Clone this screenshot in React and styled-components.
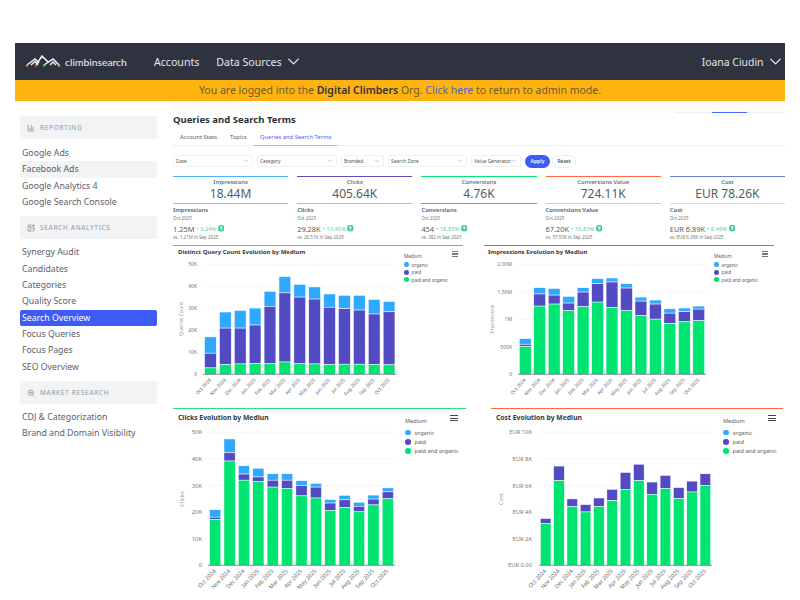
import React from "react";
import styled, { createGlobalStyle } from "styled-components";
import { ChartColumn, ImagePlus, ZoomIn, ChevronDown } from "lucide-react";

const FONT = '"Noto Sans", "Open Sans", Arial, sans-serif';
const BLUE = "#2fa8ff";
const PURPLE = "#534bc4";
const GREEN = "#00e472";

const Global = createGlobalStyle`
  html, body { margin: 0; padding: 0; background: #fff; width: 800px; height: 600px; overflow: hidden; }
  body { font-family: ${FONT}; color: #444; }
  * { box-sizing: border-box; }
`;

const Page = styled.div`
  width: 800px; height: 600px; padding: 43px 15px 0; overflow: hidden;
  display: flex; flex-direction: column;
`;
const Nav = styled.header`
  height: 37px; background: #2f3340; display: flex; align-items: center; padding: 0 0 0 11px; color: #e4e6ea;
  flex: none;
`;
const Brand = styled.div`
  display: flex; align-items: center; gap: 4px; width: 128px; flex: none;
`;
const BrandName = styled.span`
  font-size: 10.3px; font-weight: 500; color: #e6e8ec; font-family: "Lato", ${FONT};
`;
const NavLink = styled.span`
  font-size: 10.6px; margin-right: 17px; display: flex; align-items: center; gap: 2.5px; white-space: nowrap;
`;
const Spacer = styled.div`flex: 1;`;
const NavUser = styled(NavLink)`margin-right: 0; font-size: 10.4px;`;
const Banner = styled.div`
  height: 21px; background: #ffb30f; flex: none; text-align: center; font-size: 10.5px; line-height: 21px; color: #6b5a2e;
  b { color: #2f3340; font-weight: 600; }
  a { color: #4a5fd8; }
`;
const Body = styled.div`display: flex; flex: 1; min-height: 0;`;
const Side = styled.aside`
  width: 158px; flex: none; padding: 15px 16px 0 5px;
`;
const SectionHead = styled.div`
  height: 23px; background: #f1f3f5; display: flex; align-items: center; gap: 5px; padding-left: 7px;
  font-size: 6.4px; letter-spacing: 0.75px; color: #8b95a1; margin-bottom: 6px; text-transform: uppercase;
  &:not(:first-child) { margin-top: 6px; margin-bottom: 5px; }
`;
const Item = styled.div`
  height: 16.35px; line-height: 16.35px; font-size: 8.75px; padding-left: 2px; border-radius: 2px; white-space: nowrap;
  color: ${p => (p.$active ? "#fff" : "#5a616b")};
  background: ${p => (p.$active ? "#3f5bf6" : p.$hover ? "#f1f3f5" : "transparent")};
`;
const Main = styled.main`flex: 1; min-width: 0;`;
const Strip = styled.div`
  height: 12px; background: #fbfbfb; display: flex; justify-content: flex-end;
`;
const StripTrack = styled.div`
  width: 108px; height: 12px; border-bottom: 1px solid #eceef1; display: flex; padding-left: 35px;
`;
const StripMark = styled.div`width: 35px; height: 12px; border-bottom: 1px solid #4f6bf5;`;
const Title = styled.h1`
  margin: 0; font-size: 9.5px; line-height: 14px; font-weight: 700; color: #2b2f38;
`;
const Tabs = styled.div`
  display: flex; height: 17px; border-bottom: 1px solid #eceef1; margin-top: 2px; padding-top: 3px; padding-left: 1px;
`;
const Tab = styled.div`
  font-size: 5.8px; padding: 0 6px; height: 13.5px; line-height: 11px; margin-right: 1px; color: ${p => (p.$on ? "#4f63e8" : "#555c66")};
  border-bottom: ${p => (p.$on ? "1px solid #a5b2fb" : "none")};
`;
const Filters = styled.div`
  display: flex; align-items: center; gap: 4px; margin-top: 8px; height: 14px;
`;
const Select = styled.div`
  width: ${p => p.$w}px; height: 12px; border: 1px solid #eef0f3; border-radius: 2px; font-size: 4.8px; color: #555;
  display: flex; align-items: center; justify-content: space-between; padding: 0 3px 0 2px; flex: none; white-space: nowrap;
  svg { color: #7d8fe0; flex: none; }
`;
const Apply = styled.div`
  width: 25px; height: 13px; border-radius: 7px; background: #3f5bf6; color: #fff; font-size: 5px; display: flex; align-items: center; justify-content: center; font-weight: 600;
`;
const Reset = styled(Apply)`
  width: 24px; background: #fff; color: #444; border: 1px solid #eceef1; margin-left: -2px; font-weight: 500;
`;
const StatGrid = styled.div`
  display: grid; grid-template-columns: repeat(5, 1fr); gap: 0 9px; margin-top: 8px; height: 69px;
`;
const Stat = styled.div``;
const Total = styled.div`
  height: 28px; border-top: 1.3px solid ${p => p.$c}; border-bottom: 1.3px solid ${p => p.$b}; text-align: center; color: #555c66;
`;
const TotalLabel = styled.div`font-size: 5.9px; line-height: 7px; margin-top: 2px; font-weight: 500;`;
const TotalValue = styled.div`font-size: 12px; line-height: 14px; margin-top: 1px;`;
const MonthLabel = styled.div`font-size: 5.9px; font-weight: 600; line-height: 8px; margin-top: 2px; color: #555c66;`;
const Small = styled.div`font-size: 4.5px; line-height: 6px; color: #777; white-space: nowrap; margin-top: ${p => p.$mt || 0}px;`;
const TrendRow = styled.div`
  display: flex; align-items: center; gap: 2px; height: 9px; margin-top: 3px; margin-bottom: 1px; font-size: 7.4px; color: #555c66; white-space: nowrap;
`;
const Pct = styled.span`font-size: 5.8px; color: #5fcf9b; display: flex; align-items: center; gap: 1.5px;`;
const ChartRow = styled.div`
  display: flex; gap: ${p => p.$gap}px; height: ${p => p.$h}px;
`;
const Card = styled.section`
  width: ${p => p.$w}px; flex: none; border-top: 1.3px solid ${p => p.$c}; display: flex; position: relative; height: 200px;
`;
const Plot = styled.div`width: ${p => p.$w}px; flex: none;`;
const ChartTitle = styled.h2`
  margin: 0; height: 12.5px; line-height: ${p => p.$lh}px; font-size: ${p => p.$fs}px; font-weight: 700; color: #33373f; padding-left: ${p => p.$pl}px; white-space: nowrap;
`;
const ChartSvg = styled.svg`display: block; font-family: ${FONT};`;
const Legend = styled.div`
  flex: 1; padding-top: ${p => p.$top}px; position: relative; font-size: ${p => p.$fs}px; color: #555c66;
`;
const LegendTitle = styled.div`line-height: ${p => p.$lh}px; margin-bottom: ${p => p.$mb}px;`;
const LegendItem = styled.div`
  display: flex; align-items: center; gap: ${p => p.$gap}px; height: ${p => p.$h}px; white-space: nowrap;
`;
const Dot = styled.span`
  width: ${p => p.$s}px; height: ${p => p.$s}px; border-radius: 50%; background: ${p => p.$c}; flex: none;
`;
const Burger = styled.div`
  position: absolute; top: ${p => p.$top}px; right: ${p => p.$right}px; width: ${p => p.$w}px; height: ${p => p.$h}px;
  display: flex; flex-direction: column; justify-content: space-between;
  span { display: block; height: 1.4px; background: ${p => p.$c}; }
`;

const MONTHS = ["Oct 2024","Nov 2024","Dec 2024","Jan 2025","Feb 2025","Mar 2025","Apr 2025","May 2025","Jun 2025","Jul 2025","Aug 2025","Sep 2025","Oct 2025"];

function BarChart({ data, max, ticks, axis, left, right, top, bottom, height, width, fs, labelRight, axisX, axisY, barRatio }) {
  const band = (right - left) / data.length;
  const bw = band * barRatio;
  const y = v => bottom - (v / max) * (bottom - top);
  return (
    <ChartSvg width={width} height={height} viewBox={`0 0 ${width} ${height}`}>
      {ticks.map(([v, label]) => (
        <g key={label}>
          {v > 0 && <line x1={left} x2={right} y1={y(v)} y2={y(v)} stroke="#f2f4f6" strokeWidth="0.8" />}
          <text x={labelRight} y={y(v) + fs * 0.36} fontSize={fs} fill="#777" textAnchor="end">{label}</text>
        </g>
      ))}
      {data.map((d, i) => {
        const x = left + band * i + (band - bw) / 2;
        const [g, p, b] = d;
        return (
          <g key={i} stroke="#fff" strokeWidth="0.5">
            {b > p && <rect x={x} y={y(b)} width={bw} height={y(p) - y(b)} fill={BLUE} />}
            <rect x={x} y={y(p)} width={bw} height={y(g) - y(p)} fill={PURPLE} />
            <rect x={x} y={y(g)} width={bw} height={bottom - y(g)} fill={GREEN} />
          </g>
        );
      })}
      <line x1={left} x2={right} y1={bottom} y2={bottom} stroke="#6b7078" strokeWidth="0.8" />
      {MONTHS.map((m, i) => {
        const cx = left + band * i + band / 2 + 1;
        const ly = bottom + 6;
        return (
          <text key={i} x={cx} y={ly} fontSize={fs - 0.2} fill="#666" textAnchor="end" transform={`rotate(-47 ${cx} ${ly})`}>{m}</text>
        );
      })}
      <text x={axisX} y={axisY} fontSize={fs} fill="#999" textAnchor="middle" transform={`rotate(-90 ${axisX} ${axisY})`}>{axis}</text>
    </ChartSvg>
  );
}

function ChartCard({ title, color, w, plotW, pl, big, chart, burgerRight }) {
  return (
    <Card $w={w} $c={color}>
      <Plot $w={plotW}>
        <ChartTitle $fs={big ? 6.8 : 6} $lh={big ? 18 : 12} $pl={pl}>{title}</ChartTitle>
        <BarChart width={plotW} {...chart} />
      </Plot>
      <Legend $top={big ? 8 : 7} $fs={big ? 5.6 : 4.6}>
        <LegendTitle $lh={big ? 8 : 7} $mb={big ? 3 : 1}>Medium</LegendTitle>
        {[["organic", BLUE], ["paid", PURPLE], ["paid and organic", GREEN]].map(([t, c]) => (
          <LegendItem key={t} $h={big ? 9.2 : 7.5} $gap={big ? 4 : 3}>
            <Dot $c={c} $s={big ? 5.5 : 4.6} />
            {t}
          </LegendItem>
        ))}
        <Burger $top={big ? 6 : 5} $right={burgerRight} $w={big ? 8 : 6.5} $h={big ? 6.5 : 6} $c={big ? "#444" : "#777"}>
          <span /><span /><span />
        </Burger>
      </Legend>
    </Card>
  );
}

const STATS = [
  { l: "Impressions", v: "18.44M", c: "#4fb3ff", b: "#e88ff0", m: "1.25M", p: "3.24%", vs: "vs. 1.21M in Sep 2025" },
  { l: "Clicks", v: "405.64K", c: "#5b4fc4", b: "#5fe8cc", m: "29.28K", p: "10.45%", vs: "vs. 26.51K in Sep 2025" },
  { l: "Conversions", v: "4.76K", c: "#00e676", b: "#ff6b5b", m: "454", p: "18.85%", vs: "vs. 382 in Sep 2025" },
  { l: "Conversions Value", v: "724.11K", c: "#ff6b3d", b: "#ffc080", m: "67.20K", p: "16.83%", vs: "vs. 57.53K in Sep 2025" },
  { l: "Cost", v: "EUR 78.26K", c: "#6b80c8", b: "#b0efe5", m: "EUR 6.89K", p: "8.49%", vs: "vs. EUR 6.35K in Sep 2025" },
];

const D1 = [[2.9,9.6,17],[4.4,21,28.3],[4.7,21,29],[5,22.4,30.1],[5,30.9,37.7],[5.6,37,44.4],[5,35.1,40.9],[4.7,34.2,39.7],[4.4,30.5,36.5],[4.6,29.8,35.9],[4.6,29.2,35.9],[4.4,27.4,34],[4.3,28.4,33.1]];
const D2 = [[.505,.547,.65],[1.24,1.46,1.575],[1.277,1.44,1.56],[1.155,1.295,1.416],[1.228,1.495,1.575],[1.313,1.647,1.739],[1.216,1.678,1.751],[1.155,1.568,1.647],[1.064,1.331,1.404],[1.003,1.277,1.35],[.924,1.112,1.191],[.954,1.137,1.204],[.973,1.185,1.24]];
const D3 = [[17.3,18.1,20.9],[39.2,42.3,47.5],[32,34.3,37.4],[31.4,33.2,36.5],[29.4,32,34.4],[28.9,32,34.4],[26.1,30,31.8],[25.3,29.4,30.8],[20.7,23.4,24.7],[21.7,24.6,26.3],[20.1,22.2,23.7],[22.7,24.9,26.4],[25,27.6,29.1]];
const D4 = [[3.14,3.52,0],[6.36,7.46,0],[4.41,4.99,0],[4.01,4.56,0],[4.41,5.06,0],[4.86,5.71,0],[5.71,6.98,0],[6.36,7.6,0],[5.34,6.26,0],[5.76,6.76,0],[5.01,5.84,0],[5.51,6.33,0],[6.01,6.88,0]];

const kTicks = [[0,"0"],[10,"10K"],[20,"20K"],[30,"30K"],[40,"40K"],[50,"50K"]];

function Logo() {
  return (
    <svg width="35" height="13" viewBox="0 0 35 13" fill="none">
      <path d="M1 10 L9 4 L13 8 M10 10 L16 1 L22 7 M18 10 L27 4 L33 10" stroke="#f6f6f6" strokeWidth="1.5" />
      <path d="M5 10 L9 6.5 L12 10 M24 10 L27 7 L30 10" stroke="#f6f6f6" strokeWidth="1.3" />
      <circle cx="1" cy="10.5" r="1.2" fill="#f08a2c" />
      <circle cx="10" cy="10.5" r="1.2" fill="#e8552c" />
      <circle cx="18" cy="10.5" r="1.2" fill="#5fc04a" />
      <circle cx="33" cy="10.5" r="1.2" fill="#a5c63f" />
    </svg>
  );
}

function UpBadge() {
  return (
    <svg width="6.5" height="6.5" viewBox="0 0 10 10">
      <circle cx="5" cy="5" r="5" fill="#3fc78f" />
      <path d="M5 8V2.5M2.6 4.8 5 2.4l2.4 2.4" stroke="#fff" strokeWidth="1.5" fill="none" />
    </svg>
  );
}

function SelectBox({ w, children }) {
  return <Select $w={w}>{children}<ChevronDown size={6} strokeWidth={2} /></Select>;
}

export default function App() {
  return (
    <Page>
      <Global />
      <Nav>
        <Brand><Logo /><BrandName>climbinsearch</BrandName></Brand>
        <NavLink>Accounts</NavLink>
        <NavLink>Data Sources <ChevronDown size={19} strokeWidth={1.7} /></NavLink>
        <Spacer />
        <NavUser>Ioana Ciudin <ChevronDown size={19} strokeWidth={1.7} /></NavUser>
      </Nav>
      <Banner>You are logged into the <b>Digital Climbers</b> Org. <a>Click here</a> to return to admin mode.</Banner>
      <Body>
        <Side>
          <SectionHead><ChartColumn size={8} strokeWidth={2.4} /> Reporting</SectionHead>
          <Item>Google Ads</Item>
          <Item $hover>Facebook Ads</Item>
          <Item>Google Analytics 4</Item>
          <Item>Google Search Console</Item>
          <SectionHead><ImagePlus size={8} strokeWidth={2.4} /> Search Analytics</SectionHead>
          <Item>Synergy Audit</Item>
          <Item>Candidates</Item>
          <Item>Categories</Item>
          <Item>Quality Score</Item>
          <Item $active>Search Overview</Item>
          <Item>Focus Queries</Item>
          <Item>Focus Pages</Item>
          <Item>SEO Overview</Item>
          <SectionHead><ZoomIn size={8} strokeWidth={2.4} /> Market Research</SectionHead>
          <Item>CDJ &amp; Categorization</Item>
          <Item>Brand and Domain Visibility</Item>
        </Side>
        <Main>
          <Strip><StripTrack><StripMark /></StripTrack></Strip>
          <Title>Queries and Search Terms</Title>
          <Tabs>
            <Tab>Account Stats</Tab>
            <Tab>Topics</Tab>
            <Tab $on>Queries and Search Terms</Tab>
          </Tabs>
          <Filters>
            <SelectBox w={80}>Date</SelectBox>
            <SelectBox w={80}>Category</SelectBox>
            <SelectBox w={43}>Branded</SelectBox>
            <SelectBox w={79}>Search Zone</SelectBox>
            <SelectBox w={50}>Value Generator</SelectBox>
            <Apply>Apply</Apply>
            <Reset>Reset</Reset>
          </Filters>
          <StatGrid>
            {STATS.map(s => (
              <Stat key={s.l}>
                <Total $c={s.c} $b={s.b}>
                  <TotalLabel>{s.l}</TotalLabel>
                  <TotalValue>{s.v}</TotalValue>
                </Total>
                <MonthLabel>{s.l}</MonthLabel>
                <Small $mt={1}>Oct 2025</Small>
                <TrendRow>{s.m} <Pct>• {s.p} <UpBadge /></Pct></TrendRow>
                <Small>{s.vs}</Small>
              </Stat>
            ))}
          </StatGrid>
          <ChartRow $gap={21} $h={163}>
            <ChartCard title="Distinct Query Count Evolution by Medium" color="#4fb3ff" w={290} plotW={231} pl={5} burgerRight={5}
              chart={{ data: D1, max: 50, ticks: kTicks, axis: "Queries Count", left: 30, right: 223.5, top: 5.3, bottom: 115.3, height: 150, fs: 5, labelRight: 24, axisX: 10, axisY: 60, barRatio: 0.79 }} />
            <ChartCard title="Impressions Evolution by Mediun" color="#7a70d8" w={290} plotW={230} pl={4} burgerRight={6}
              chart={{ data: D2, max: 2, ticks: [[0,"0"],[.5,"500K"],[1,"1M"],[1.5,"1.50M"],[2,"2.00M"]], axis: "Impressions", left: 34, right: 222, top: 5.3, bottom: 115.3, height: 150, fs: 5, labelRight: 28, axisX: 10, axisY: 60, barRatio: 0.82 }} />
          </ChartRow>
          <ChartRow $gap={25} $h={200}>
            <ChartCard big title="Clicks Evolution by Mediun" color="#2fdc80" w={293} plotW={232} pl={5} burgerRight={8}
              chart={{ data: D3, max: 50, ticks: kTicks, axis: "Clicks", left: 35, right: 222, top: 10.3, bottom: 143.3, height: 178, fs: 5.8, labelRight: 29, axisX: 11, axisY: 77, barRatio: 0.78 }} />
            <ChartCard big title="Cost Evolution by Mediun" color="#ff6b3d" w={292} plotW={232} pl={5} burgerRight={7}
              chart={{ data: D4, max: 10, ticks: [[0,"EUR 0.00"],[2,"EUR 2K"],[4,"EUR 4K"],[6,"EUR 6K"],[8,"EUR 8K"],[10,"EUR 10K"]], axis: "Cost", left: 48, right: 221, top: 10.3, bottom: 143.3, height: 178, fs: 5.8, labelRight: 41, axisX: 12, axisY: 77, barRatio: 0.8 }} />
          </ChartRow>
        </Main>
      </Body>
    </Page>
  );
}
